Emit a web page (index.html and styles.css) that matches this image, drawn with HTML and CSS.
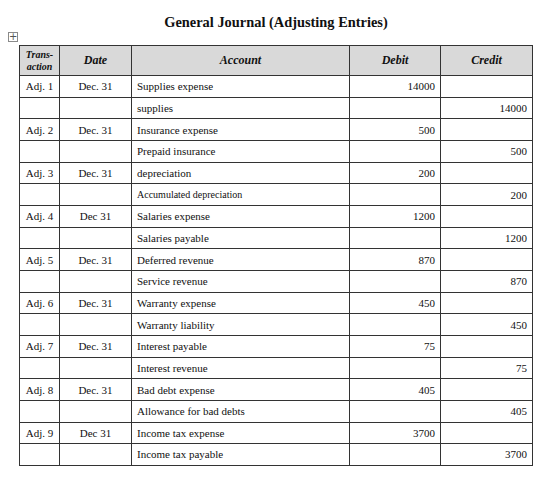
FILE: index.html
```html
<!DOCTYPE html>
<html lang="en">
<head>
    <meta charset="UTF-8" />
    <meta name="viewport" content="width=device-width, initial-scale=1.0" />
    <title>General Journal</title>
    <link rel="stylesheet" href="styles.css">
</head>
<body>
    <div class="page">
        <h1 class="title">General Journal (Adjusting Entries)</h1>
        <div class="sheet">
            <span class="handle">+</span>
            <table class="journal">
                <thead>
                    <tr>
                        <th class="trans">Trans-<br>action</th>
                        <th class="date">Date</th>
                        <th class="account">Account</th>
                        <th class="debit">Debit</th>
                        <th class="credit">Credit</th>
                    </tr>
                </thead>
                <tbody>
                    <tr><td>Adj. 1</td><td class="c">Dec. 31</td><td>Supplies expense</td><td class="n">14000</td><td></td></tr>
                    <tr><td></td><td></td><td>supplies</td><td></td><td class="n">14000</td></tr>
                    <tr><td>Adj. 2</td><td class="c">Dec. 31</td><td>Insurance expense</td><td class="n">500</td><td></td></tr>
                    <tr><td></td><td></td><td>Prepaid insurance</td><td></td><td class="n">500</td></tr>
                    <tr><td>Adj. 3</td><td class="c">Dec. 31</td><td>depreciation</td><td class="n">200</td><td></td></tr>
                    <tr><td></td><td></td><td class="small">Accumulated depreciation</td><td></td><td class="n">200</td></tr>
                    <tr><td>Adj. 4</td><td class="c">Dec 31</td><td>Salaries expense</td><td class="n">1200</td><td></td></tr>
                    <tr><td></td><td></td><td>Salaries payable</td><td></td><td class="n">1200</td></tr>
                    <tr><td>Adj. 5</td><td class="c">Dec. 31</td><td>Deferred revenue</td><td class="n">870</td><td></td></tr>
                    <tr><td></td><td></td><td>Service revenue</td><td></td><td class="n">870</td></tr>
                    <tr><td>Adj. 6</td><td class="c">Dec. 31</td><td>Warranty expense</td><td class="n">450</td><td></td></tr>
                    <tr><td></td><td></td><td>Warranty liability</td><td></td><td class="n">450</td></tr>
                    <tr><td>Adj. 7</td><td class="c">Dec. 31</td><td>Interest payable</td><td class="n">75</td><td></td></tr>
                    <tr><td></td><td></td><td>Interest revenue</td><td></td><td class="n">75</td></tr>
                    <tr><td>Adj. 8</td><td class="c">Dec. 31</td><td>Bad debt expense</td><td class="n">405</td><td></td></tr>
                    <tr><td></td><td></td><td>Allowance for bad debts</td><td></td><td class="n">405</td></tr>
                    <tr><td>Adj. 9</td><td class="c">Dec 31</td><td>Income tax expense</td><td class="n">3700</td><td></td></tr>
                    <tr><td></td><td></td><td>Income tax payable</td><td></td><td class="n">3700</td></tr>
                </tbody>
            </table>
            <span class="corner"></span>
        </div>
    </div>
</body>
</html>
```

FILE: styles.css
```css
body{
    margin: 0;
    background-color: #fff;
    font-family: "Liberation Serif", "Times New Roman", serif;
    color: #111;
}
.page{
    padding: 12px 0 0 19px;
    width: 514px;
}
.title{
    margin: 0 0 13px 0;
    font-size: 14.4px;
    font-weight: bold;
    text-align: center;
    line-height: 20px;
}
.sheet{
    position: relative;
}
.handle{
    position: absolute;
    left: -11px;
    top: -13px;
    width: 8px;
    height: 8px;
    border: 1px solid #8a8a8a;
    font-family: "DejaVu Sans", sans-serif;
    font-size: 10px;
    line-height: 8px;
    text-align: center;
    color: #555;
    background: #fff;
}
.corner{
    position: absolute;
    right: -6px;
    bottom: -6px;
    width: 4px;
    height: 4px;
    border: 1px solid #999;
    background: #fff;
}
.journal{
    border-collapse: collapse;
    table-layout: fixed;
    width: 514px;
}
.journal th,
.journal td{
    box-sizing: border-box;
    border: 1px solid #333;
    padding: 0 5px;
    font-size: 11px;
    height: 21.67px;
    white-space: nowrap;
}
.journal th{
    background-color: #d9d9d9;
    font-weight: bold;
    font-style: italic;
    font-size: 12px;
    height: 30px;
    text-align: center;
}
.journal th.trans{
    width: 40px;
    padding: 0;
    font-size: 10px;
    line-height: 12px;
}
.journal th.date{
    width: 72px;
}
.journal th.account{
    width: 218px;
}
.journal th.debit{
    width: 91px;
}
.journal td:first-child{
    text-align: center;
    padding: 0;
}
.journal .c{
    text-align: center;
}
.journal .n{
    text-align: right;
}
.journal .small{
    font-size: 10px;
}
```
